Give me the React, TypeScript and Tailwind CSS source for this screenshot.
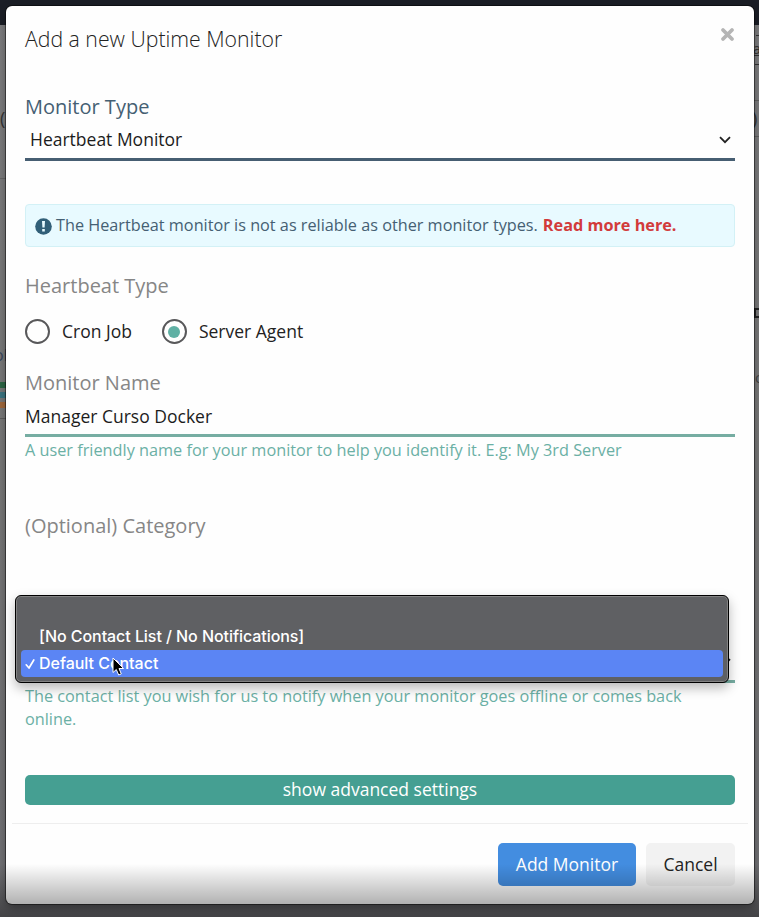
import React from "react";

function Label({ children, className = "" }: { children: React.ReactNode; className?: string }) {
  return (
    <div className={`h-[30px] whitespace-nowrap text-[20px] leading-[30px] ${className}`}>
      <span>{children}</span>
    </div>
  );
}

function Radio({ label, checked }: { label: string; checked?: boolean }) {
  return (
    <label className="flex h-[25px] items-center gap-3">
      <span className="flex size-[25px] items-center justify-center rounded-full border-2 border-[#58585a]">
        {checked && <span className="size-3 rounded-full bg-[#5fb0a4]" />}
      </span>
      <span className="whitespace-nowrap text-[17.5px] text-[#222]">{label}</span>
    </label>
  );
}

function PageBehind() {
  return (
    <div className="absolute inset-0 overflow-hidden bg-linear-to-b from-[#7c7c7e] via-[#777777] to-[#707074] text-[18px]">
      <div className="h-[25px] bg-[#1b1e26]" />
      <span className="absolute left-0 top-[105px] text-[#333]">(</span>
      <div className="absolute left-0 top-[178px] h-px w-2 bg-[#666]" />
      <span className="absolute -left-[6px] top-[343px] text-[16px] text-[#37455a]">ol</span>
      <div className="absolute left-0 top-[382px] h-[6px] w-2 bg-[#2d6645]" />
      <div className="absolute left-0 top-[392px] h-[6px] w-2 bg-[#3b7480]" />
      <div className="absolute left-0 top-[402px] h-[6px] w-2 bg-[#a0683c]" />
      <div className="absolute left-0 top-[418px] h-px w-2 bg-[#5c5c5c]" />
      <div className="absolute right-0 top-[35px] h-px w-[3px] bg-[#333]" />
      <span className="absolute left-[753px] top-[38px] text-[14px] text-[#333] underline">a</span>
      <div className="absolute right-0 top-[64px] h-px w-1 bg-[#333]" />
      <div className="absolute right-0 top-[100px] h-px w-[5px] bg-[#5f5f5f]" />
      <span className="absolute left-[752px] top-[105px] text-[#333]">)</span>
      <div className="absolute right-0 top-[136px] h-px w-[5px] bg-[#5f5f5f]" />
      <div className="absolute -right-1 top-[308px] h-[10px] w-[9px] border-2 border-[#222]" />
      <span className="absolute left-[755px] top-[366px] text-[15px] text-[#444]">o</span>
    </div>
  );
}

function ContactMenu() {
  return (
    <div className="absolute -left-[10px] -top-[49px] h-[88px] w-[714px] rounded-[6px] border border-black bg-[#5f6063] px-[5px] pt-[27px] font-['Inter','Liberation_Sans',sans-serif] text-[16px] font-medium text-white shadow-[inset_0_0_0_1px_#838383,0_5px_12px_rgba(0,0,0,0.28)]">
      <div className="h-[27px] pl-[18px] leading-[27px]">
        <span className="inline-block whitespace-nowrap tracking-[-0.06px]">[No Contact List / No Notifications]</span>
      </div>
      <div className="flex h-[27px] items-center rounded-[4px] bg-[#5b85f4] pl-1">
        <svg className="mr-1 h-[12px] w-[10px]" viewBox="0 0 10 12" fill="none" stroke="white" strokeWidth="1.7" strokeLinecap="round" strokeLinejoin="round">
          <path d="M1.2 6.8 4 10 8.8 2" />
        </svg>
        <span className="-mt-[2px] whitespace-nowrap tracking-[-0.03px]">Default Contact</span>
      </div>
      <svg className="absolute left-[96px] top-[61px] h-[20px] w-[13px]" viewBox="0 0 13 20">
        <path d="M1 1V15.5L4.3 12.5 6.7 18 9.3 16.9 7 11.5H11.6Z" fill="black" stroke="white" strokeWidth="1" />
      </svg>
    </div>
  );
}

export default function App() {
  return (
    <div className="relative h-[917px] w-[759px] overflow-hidden px-[5px] pt-[5px] font-['Open_Sans','Noto_Sans',sans-serif]">
      <PageBehind />
      <div className="relative mx-px mt-px flex h-[898px] w-[748px] flex-col rounded-[6px] bg-[#fefefe] px-[19px] pt-4 shadow-[0_0_0_1px_rgba(0,0,0,0.45),0_4px_10px_rgba(0,0,0,0.35)]">
        <header className="flex h-9 items-center justify-between">
          <h1 className="-mt-[2px] whitespace-nowrap text-[21.25px] font-light text-[#222]">Add a new Uptime Monitor</h1>
          <svg className="-mt-[11px] size-[15px]" viewBox="0 0 15 15" stroke="#b5b5b5" strokeWidth="3.8" strokeLinecap="round">
            <path d="M3 3 12 12M12 3 3 12" />
          </svg>
        </header>

        <Label className="mt-[34px] text-[#456073]">Monitor Type</Label>
        <div className="flex h-[39px] items-center justify-between border-b-[3px] border-[#465e72] pl-[5px] pr-1">
          <span className="-mt-[2px] whitespace-nowrap text-[17.5px] text-[#1c1c1c]">Heartbeat Monitor</span>
          <svg className="h-[8px] w-3" viewBox="0 0 12 8" fill="none" stroke="#222" strokeWidth="1.8">
            <path d="M1 1.2 6 6.2 11 1.2" />
          </svg>
        </div>

        <div className="mt-[43px] flex h-[43px] items-center rounded-[4px] border border-[#d3f1f6] bg-[#e8faff] pl-[9px] text-[16.24px] text-[#456073]">
          <svg className="mr-1 mt-[2px] size-[17px]" viewBox="0 0 17 17">
            <circle cx="8.5" cy="8.5" r="8.3" fill="#315f78" />
            <path d="M7 3h3l-.4 6.6H7.4ZM7.2 11h2.6v2.6H7.2Z" fill="#e8faff" />
          </svg>
          <span className="whitespace-nowrap">The Heartbeat monitor is not as reliable as other monitor types.</span>
          <a className="ml-[5px] whitespace-nowrap font-bold text-[#d23b3b]">Read more here.</a>
        </div>

        <Label className="mt-6 text-[#868686]">Heartbeat Type</Label>
        <div className="mt-[18px] flex gap-[30px]">
          <Radio label="Cron Job" />
          <Radio label="Server Agent" checked />
        </div>

        <Label className="mt-6 text-[#868686]">Monitor Name</Label>
        <div className="flex h-[39px] items-center border-b-[3px] border-[#76ada2] text-[17.5px] text-[#1c1c1c]">
          <span className="whitespace-nowrap">Manager Curso Docker</span>
        </div>
        <p className="h-[26px] text-[16.27px] leading-[26px] text-[#6bb0a5]">
          <span className="whitespace-nowrap">A user friendly name for your monitor to help you identify it. E.g: My 3rd Server</span>
        </p>

        <Label className="mt-12 text-[#868686]">(Optional) Category</Label>
        <div className="relative mt-[103px] flex h-[39px] items-center justify-end border-b-[3px] border-[#76ada2] pr-1">
          <svg className="h-[8px] w-3" viewBox="0 0 12 8" fill="none" stroke="#222" strokeWidth="1.8">
            <path d="M1 1.2 6 6.2 11 1.2" />
          </svg>
          <ContactMenu />
        </div>
        <p className="mt-[2px] text-[16.27px] leading-[23px] text-[#6bb0a5]">
          <span className="whitespace-nowrap">The contact list you wish for us to notify when your monitor goes offline or comes back</span>
          <br />
          <span>online.</span>
        </p>

        <button className="mt-11 h-[30px] rounded-[5px] bg-[#459f92] pb-[2px] text-[17.5px] leading-[28px] text-white">
          <span className="whitespace-nowrap">show advanced settings</span>
        </button>

        <footer className="-mx-[13px] mt-[18px] flex justify-end gap-[10px] border-t border-[#eee] pr-[13px] pt-[19px]">
          <button className="h-[43px] w-[138px] rounded-[5px] bg-[#438de0] text-[17.5px] text-white">Add Monitor</button>
          <button className="h-[43px] w-[89px] rounded-[5px] bg-[#f2f2f2] text-[17.5px] text-[#222]">Cancel</button>
        </footer>
      </div>
      <div className="pointer-events-none absolute inset-x-0 bottom-0 h-[53px] bg-linear-to-b from-transparent to-black/40" />
    </div>
  );
}
